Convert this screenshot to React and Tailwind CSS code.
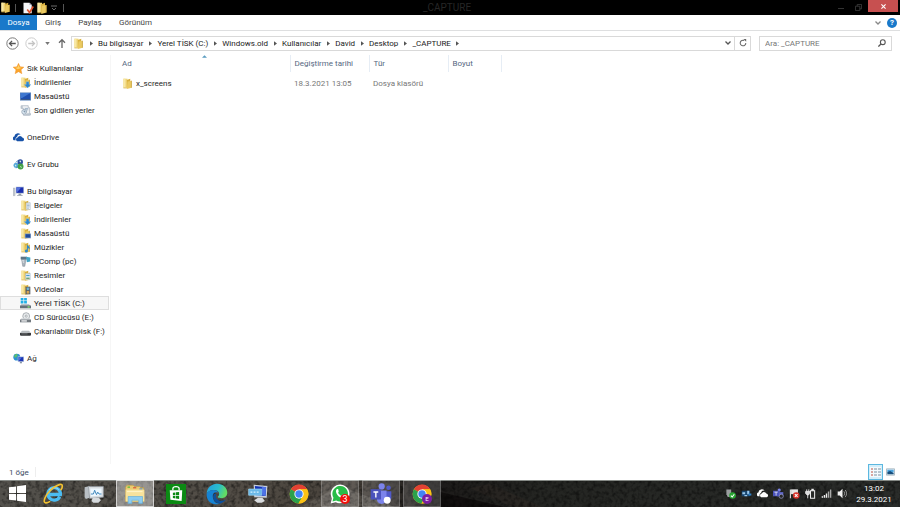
import React from "react";

function FolderShape() {
  return (
    <>
      <path d="M2 1h6v13H2z" fill="#efd67c" />
      <path d="M2 1h3v13H2z" fill="#f8e8a6" />
      <path d="M7 3l5-2v12l-5 2z" fill="#d9b03c" />
      <path d="M8 5l6-1v10l-7 2z" fill="#ebca62" />
      <path d="M13 4h1v10h-1z" fill="#c0982f" />
      <path d="M2 14h5v1H2z" fill="#d4ac3e" />
    </>
  );
}

function Folder({ className = "size-[11px]", children }) {
  return (
    <svg viewBox="0 0 16 16" className={className} aria-hidden="true">
      <FolderShape />
      {children}
    </svg>
  );
}

const downArrow = <path d="M9 7h4v4h3l-5 5-5-5h3z" fill="#2a86d1" stroke="#8cc5ee" strokeWidth=".5" />;

function Svg({ children, className = "size-[11px]", box = "0 0 16 16" }) {
  return (
    <svg viewBox={box} className={className} fill="none" aria-hidden="true">
      {children}
    </svg>
  );
}

const navIcons = {
  star: (
    <Svg>
      <path d="M8 .5l2.300 4.900 5.500.6-4.100 3.800 1.200 5.700L8 12.600l-4.900 2.900 1.200-5.700L.2 6l5.500-.6z" fill="#fba52c" stroke="#ee8a1d" strokeWidth=".6" />
      <path d="M8 3l1.500 3.500 3.500.5-6 2-4-2 3.500-.5z" fill="#ffd56b" />
    </Svg>
  ),
  downloads: <Folder>{downArrow}</Folder>,
  desktop: (
    <Svg>
      <path d="M0 2h16v12H0z" fill="#6f94c4" />
      <path d="M1 3h14v9H1z" fill="#1f4fae" />
      <path d="M1 3h14L3 10H1z" fill="#3f78d0" />
      <path d="M1 12h14v1H1z" fill="#2c456e" />
    </Svg>
  ),
  recent: (
    <Svg>
      <path d="M2 1h10v3h2v11H5V5H2z" fill="#eef1f4" stroke="#a5afba" />
      <path d="M1 1h3v4H1zM11 12h5v3H6z" fill="#b9c3cd" />
      <path d="M7 5h5M7 7h5M7 9h3" stroke="#7f9cb8" />
      <circle cx="6" cy="10" r="3.500" fill="#dce8f2" stroke="#8899aa" />
      <path d="M6 8v2h2" stroke="#49647f" />
    </Svg>
  ),
  onedrive: (
    <Svg>
      <path d="M1 12a3 3 0 0 1 1-5.500A5 5 0 0 1 11 4a4 4 0 0 0-5 3 4 4 0 0 0-2 5z" fill="#1752a8" />
      <path d="M6 13.500a3 3 0 0 1 .8-5.600A3.600 3.600 0 0 1 13.500 8a2.800 2.800 0 0 1 .5 5.500z" fill="#1752a8" />
    </Svg>
  ),
  homegroup: (
    <Svg>
      <circle cx="4.500" cy="9" r="3.700" fill="#57a8d8" />
      <circle cx="10.500" cy="4.500" r="4" fill="#2d4f9e" />
      <circle cx="11" cy="11" r="4.300" fill="#43a047" />
      <path d="M9 3l2-1 1 2-1 1zM3 8l2 1-1 2-1-1zM10 10l2 1 1 2-2-1z" fill="#d8f2e0" />
      <path d="M4 5l3-3M7 12l-3 1" stroke="#357fb5" />
    </Svg>
  ),
  computer: (
    <Svg>
      <path d="M0 3h3v11H0z" fill="#c7cdd4" stroke="#8d96a0" strokeWidth=".5" />
      <path d="M4 1h12v10H4z" fill="#b8c4d8" />
      <path d="M5 2h10v8H5z" fill="#1b2fb0" />
      <path d="M5 2h7L6 9H5z" fill="#5572dd" />
      <path d="M8 11h4v2h2v1H6v-1h2z" fill="#929da9" />
    </Svg>
  ),
  documents: (
    <Folder>
      <path d="M9 4h6v10H9z" fill="#f5f8fb" stroke="#92a4b5" strokeWidth=".6" />
      <path d="M10 6h4M10 8h4M10 10h4M10 12h3" stroke="#6b90b3" strokeWidth=".8" />
    </Folder>
  ),
  folderDesktop: (
    <Folder>
      <path d="M7 8h9v7H7z" fill="#87a3c8" />
      <path d="M8 9h7v5H8z" fill="#1f4a9a" />
    </Folder>
  ),
  music: (
    <Folder>
      <path d="M10 3c1 3 5 3 4 8-1-2-2-2-2.500-2v4a2.200 2.200 0 1 1-1.500-2z" fill="#2c88cc" />
    </Folder>
  ),
  pcomp: (
    <Svg>
      <path d="M2 3h7l-2 12H4z" fill="#aab4bd" stroke="#77828c" strokeWidth=".7" />
      <path d="M1 1h9v4H1z" fill="#5c7588" />
      <path d="M9 1l6 1v6l-5 1z" fill="#41a5c7" />
      <path d="M3 7h3M4 9h2" stroke="#fff" />
    </Svg>
  ),
  pictures: (
    <Folder>
      <path d="M8 5h7v9H8z" fill="#edf5fa" stroke="#8da5b7" strokeWidth=".6" />
      <path d="M9 7h5v2H9z" fill="#4b9dd1" />
      <path d="M9 11h5v2H9z" fill="#69a06a" />
    </Folder>
  ),
  videos: (
    <Folder>
      <path d="M8 4h7v11H8z" fill="#4d5358" />
      <path d="M10 5h3v4h-3z" fill="#69b4d7" />
      <path d="M10 10h3v4h-3z" fill="#d9a754" />
      <path d="M9 4v11M14 4v11" stroke="#ddd" strokeWidth=".7" strokeDasharray="1 1" />
    </Folder>
  ),
  localDisk: (
    <Svg>
      <path d="M1 0h4v3.500H1zM6 0h4v3.500H6zM1 4.500h4V8H1zM6 4.500h4V8H6z" fill="#1fb0e8" />
      <path d="M2 9h11l3 3H0z" fill="#aab3ba" />
      <path d="M0 11h16v4H0z" fill="#65717b" />
      <path d="M11 12h3v2h-3z" fill="#7fe36b" />
    </Svg>
  ),
  cd: (
    <Svg>
      <circle cx="9" cy="6" r="5" fill="#e8ebed" stroke="#8d949a" />
      <circle cx="9" cy="6" r="1.500" fill="#fff" stroke="#8d949a" />
      <path d="M2 9h12l2 3H0z" fill="#d5d9dc" />
      <path d="M0 11h16v4H0z" fill="#737a80" />
      <path d="M2 12h8v2H2z" fill="#eceeef" />
    </Svg>
  ),
  removable: (
    <Svg>
      <path d="M3 7h10l3 3H0z" fill="#b9bdc0" />
      <path d="M0 10h16v3l-1 1H1l-1-1z" fill="#37393b" />
      <path d="M2 11h9v1H2z" fill="#85898c" />
    </Svg>
  ),
  network: (
    <Svg>
      <circle cx="5.500" cy="6" r="5" fill="#2c8fd3" />
      <path d="M2 3l3-2 2 2-2 3-3 1zM6 8l3-1-1 3z" fill="#5cc06d" />
      <path d="M7 5h9v8H7z" fill="#bcc8dc" />
      <path d="M8 6h7v6H8z" fill="#1c36b4" />
      <path d="M8 6h5l-4 5H8z" fill="#4e70df" />
      <path d="M10 13h3v2h-3z" fill="#8996a4" />
    </Svg>
  ),
};

const groups = [
  {
    label: "Sık Kullanılanlar",
    icon: "star",
    items: [
      ["İndirilenler", "downloads"],
      ["Masaüstü", "desktop"],
      ["Son gidilen yerler", "recent"],
    ],
  },
  { label: "OneDrive", icon: "onedrive", items: [] },
  { label: "Ev Grubu", icon: "homegroup", items: [] },
  {
    label: "Bu bilgisayar",
    icon: "computer",
    items: [
      ["Belgeler", "documents"],
      ["İndirilenler", "downloads"],
      ["Masaüstü", "folderDesktop"],
      ["Müzikler", "music"],
      ["PComp (pc)", "pcomp"],
      ["Resimler", "pictures"],
      ["Videolar", "videos"],
      ["Yerel TİSK (C:)", "localDisk"],
      ["CD Sürücüsü (E:)", "cd"],
      ["Çıkarılabilir Disk (F:)", "removable"],
    ],
  },
  { label: "Ağ", icon: "network", items: [] },
];

const crumbs = ["Bu bilgisayar", "Yerel TİSK (C:)", "Windows.old", "Kullanıcılar", "David", "Desktop", "_CAPTURE"];

function CrumbArrow() {
  return (
    <span className="flex w-3.5 shrink-0 justify-center">
      <Svg box="0 0 4 6" className="h-[5px] w-[3px]">
        <path d="M0 0l4 3-4 3z" fill="#555" />
      </Svg>
    </span>
  );
}

function Chevron({ className = "h-1 w-1.5", color = "#555" }) {
  return (
    <Svg box="0 0 6 4" className={className}>
      <path d="M.5.500L3 3 5.500.5" stroke={color} strokeWidth="1.300" />
    </Svg>
  );
}

function TitleBar() {
  return (
    <header className="flex h-[15px] shrink-0 items-center bg-black">
      <Folder className="size-[11px] shrink-0" />
      <span className="ml-1 h-2 w-px bg-[#555]" />
      <button aria-label="Özellikler" className="ml-1.5">
        <Svg className="size-3">
          <path d="M2 1h8l3 3v11H2z" fill="#f4f5f7" />
          <path d="M10 1l3 3h-3z" fill="#aab" />
          <path d="M7 10l3 4 5-8" stroke="#e0532f" strokeWidth="2.200" />
        </Svg>
      </button>
      <button aria-label="Yeni klasör" className="ml-0.5">
        <Folder className="size-3" />
      </button>
      <button aria-label="Özelleştir" className="ml-[3px]">
        <Svg box="0 0 6 6" className="size-1.5">
          <path d="M0 1h6M1 3l2 2 2-2" stroke="#777" strokeWidth=".9" />
        </Svg>
      </button>
      <span className="ml-1.5 h-2 w-px bg-[#555]" />
      <h1 className="flex-1 pr-0.5 text-center text-[10px] leading-3 text-[#262626]">_CAPTURE</h1>
      <button aria-label="Simge durumuna küçült" className="flex h-full w-[18px] items-center justify-center">
        <span className="mt-0.5 h-px w-1.5 bg-[#333]" />
      </button>
      <button aria-label="Önceki boyut" className="flex h-full w-4 items-center justify-center">
        <Svg box="0 0 8 8" className="size-[7px]">
          <path d="M.5 2.500h5v5h-5zM2.500 2.500v-2h5v5h-2" stroke="#3a3a3a" />
        </Svg>
      </button>
      <button aria-label="Kapat" className="mr-0.5 ml-0.5 flex h-3 w-[30px] items-center justify-center self-start bg-[#c75050]">
        <Svg box="0 0 6 6" className="size-[5px]">
          <path d="M.5.500l5 5M5.500.500l-5 5" stroke="#fff" strokeWidth="1.300" />
        </Svg>
      </button>
    </header>
  );
}

function Ribbon() {
  return (
    <nav className="flex h-4 shrink-0 items-stretch border-b border-[#dedfe0] text-[#444]">
      <button className="w-[37px] bg-[#1979ca] text-white">Dosya</button>
      <button className="w-8">Giriş</button>
      <button className="w-[42px]">Paylaş</button>
      <button className="w-[49px]">Görünüm</button>
      <span className="flex-1" />
      <button aria-label="Şeridi genişlet" className="mr-1.5">
        <Chevron color="#888" />
      </button>
      <button aria-label="Yardım" className="mr-[3px] flex items-center">
        <span className="flex size-2.5 items-center justify-center rounded-full bg-[#1979ca] text-[8px] leading-[9px] font-bold text-white">?</span>
      </button>
    </nav>
  );
}

function AddressRow() {
  return (
    <div className="flex h-6 shrink-0 items-center">
      <button aria-label="Geri" className="ml-[6px]">
        <Svg className="size-[13px]">
          <circle cx="8" cy="8" r="7" stroke="#777" strokeWidth="1.200" />
          <path d="M12 8H4.500M7.500 4.800L4.300 8l3.200 3.200" stroke="#555" strokeWidth="1.600" />
        </Svg>
      </button>
      <button aria-label="İleri" className="ml-1.5">
        <Svg className="size-[13px]">
          <circle cx="8" cy="8" r="7" stroke="#ccc" strokeWidth="1.200" />
          <path d="M4 8h7.500M8.500 4.800L11.700 8l-3.200 3.200" stroke="#c4c4c4" strokeWidth="1.600" />
        </Svg>
      </button>
      <button aria-label="Son konumlar" className="ml-[7px]">
        <Svg box="0 0 6 4" className="h-[3px] w-[5px]">
          <path d="M0 0h6L3 4z" fill="#777" />
        </Svg>
      </button>
      <button aria-label="Yukarı" className="ml-2">
        <Svg box="0 0 8 10" className="h-2.5 w-2">
          <path d="M4 10V2M1 4.700L4 1.700l3 3" stroke="#666" strokeWidth="1.300" />
        </Svg>
      </button>
      <div className="ml-[5px] flex h-[15px] min-w-0 flex-1 items-center border border-[#d9d9d9] pl-px text-[#222]">
        <Folder className="size-[11px] shrink-0" />
        {crumbs.map((c) => (
          <React.Fragment key={c}>
            <CrumbArrow />
            <button className="whitespace-nowrap">{c}</button>
          </React.Fragment>
        ))}
        <CrumbArrow />
        <span className="flex-1" />
        <button aria-label="Önceki konumlar" className="mr-[3px]">
          <Chevron />
        </button>
        <button aria-label="Yenile" className="flex h-full w-4 items-center justify-center border-l border-[#d9d9d9]">
          <Svg box="0 0 10 10" className="size-2">
            <path d="M8.500 5A3.500 3.500 0 1 1 6.500 1.900" stroke="#666" strokeWidth="1.300" />
            <path d="M5.500 0h3.500v3.500z" fill="#666" />
          </Svg>
        </button>
      </div>
      <label className="mr-2 ml-2 flex h-[15px] w-[133px] shrink-0 items-center border border-[#d9d9d9] px-[5px]">
        <input aria-label="Ara" placeholder="Ara: _CAPTURE" className="min-w-0 flex-1 text-[8px] outline-none placeholder:text-[#777]" />
        <Svg box="0 0 10 10" className="size-2">
          <circle cx="6" cy="4" r="3" stroke="#555" strokeWidth="1.400" />
          <path d="M4 6L.5 9.500" stroke="#555" strokeWidth="1.600" />
        </Svg>
      </label>
    </div>
  );
}

function Sidebar() {
  return (
    <aside className="flex w-[111px] shrink-0 flex-col gap-[13px] border-r border-[#f6f6f6] pt-[6px] pr-px text-[#1e1e1e]">
      {groups.map((g) => (
        <div key={g.label}>
          <a href="#" className="flex h-3.5 items-center gap-[3px] pl-[13px]">
            {navIcons[g.icon]}
            {g.label}
          </a>
          {g.items.map(([label, icon]) => (
            <a
              key={label}
              href="#"
              className={
                icon === "localDisk"
                  ? "flex h-3.5 items-center gap-[3px] border border-[#dedede] bg-[#f7f7f7] pl-[19px] whitespace-nowrap"
                  : "flex h-3.5 items-center gap-[3px] border border-transparent pl-[19px] whitespace-nowrap"
              }
            >
              {navIcons[icon]}
              {label}
            </a>
          ))}
        </div>
      ))}
    </aside>
  );
}

function FileList() {
  return (
    <main className="min-w-0 flex-1">
      <table className="w-[390px] table-fixed border-collapse text-left">
        <colgroup>
          <col className="w-[179px]" />
          <col className="w-[79px]" />
          <col className="w-[79px]" />
          <col className="w-[53px]" />
        </colgroup>
        <thead>
          <tr className="h-[17px] text-[#56687f]">
            <th className="relative border-r border-[#e6edf5] pl-[11px] font-normal">
              Ad
              <Svg box="0 0 6 3" className="absolute top-0 right-[83px] h-[3px] w-[5px]">
                <path d="M0 3l3-3 3 3z" fill="#5a9cc0" />
              </Svg>
            </th>
            <th className="border-r border-[#e6edf5] pl-1 font-normal whitespace-nowrap">Değiştirme tarihi</th>
            <th className="border-r border-[#e6edf5] pl-1 font-normal">Tür</th>
            <th className="border-r border-[#e6edf5] pl-1 font-normal">Boyut</th>
          </tr>
        </thead>
        <tbody>
          <tr className="h-[22px] text-[#777]">
            <td className="pl-[11px] text-[#1e1e1e]">
              <span className="flex items-center gap-[3px]">
                <Folder />
                x_screens
              </span>
            </td>
            <td className="pl-1">18.3.2021 13:05</td>
            <td className="pl-1">Dosya klasörü</td>
            <td />
          </tr>
        </tbody>
      </table>
    </main>
  );
}

function StatusBar() {
  return (
    <footer className="flex h-4 shrink-0 items-center pr-0.5 pl-[9px] text-[#3c4c63]">
      <span>1 öğe</span>
      <span className="ml-1.5 h-2.5 w-px bg-[#eee]" />
      <span className="flex-1" />
      <button aria-label="Ayrıntılar" className="flex h-4 w-[15px] items-center justify-center border border-[#5cb8e0] bg-[#d3eefa]">
        <Svg box="0 0 11 10" className="h-2.5 w-[11px]">
          <path d="M0 0h11v10H0z" fill="#f4fafd" />
          <path d="M1 2h2M1 5h2M1 8h2" stroke="#d08a80" strokeWidth="1.500" />
          <path d="M4 2h3M8 2h3M4 5h3M8 5h3M4 8h3M8 8h3" stroke="#7890a0" />
        </Svg>
      </button>
      <button aria-label="Büyük simgeler" className="flex h-4 w-[15px] items-center justify-center">
        <Svg box="0 0 10 8" className="h-2 w-[9px]">
          <path d="M.5.500h9v7h-9z" fill="#e8f3fa" stroke="#a5b4be" />
          <path d="M1.500 1.500h7v3h-7z" fill="#4aa3dd" />
          <path d="M1.500 4l3-1 4 2v1.500h-7z" fill="#174e7c" />
        </Svg>
      </button>
    </footer>
  );
}

function ChromeShape() {
  return (
    <>
      <circle cx="16" cy="16" r="15" fill="#fbc116" />
      <path d="M16 16L3 8.500A15 15 0 0 1 29 8.500H16z" fill="#e34133" />
      <path d="M3 8.500A15 15 0 0 0 15 31l7-11.500L16 16z" fill="#2ca14c" />
      <path d="M16 8.500h13A15 15 0 0 1 15 31l7.500-11.500z" fill="#fbc116" />
      <circle cx="16" cy="16" r="7.400" fill="#fff" />
      <circle cx="16" cy="16" r="5.900" fill="#4285f4" />
    </>
  );
}

const big = "size-5";
const apps = [
  {
    name: "Internet Explorer",
    icon: (
      <Svg box="0 0 32 32" className="size-[21px]">
        <path d="M25.500 21A9.500 9.500 0 1 1 26.500 17.500H9" stroke="#4bbcf2" strokeWidth="5" />
        <path d="M9 11a10 10 0 0 1 15-1" stroke="#a4e2fb" strokeWidth="1.500" />
        <path d="M27 11c4-6 3-10-2-8.500C16 5 4 17 2 26c-1 6 4 5 9 2" stroke="#f3c231" strokeWidth="2.500" />
      </Svg>
    ),
  },
  {
    name: "Kaynak İzleyicisi",
    icon: (
      <Svg box="0 0 32 32" className={big}>
        <path d="M1 5l8-2v19l-6 2-2-3z" fill="#b9bfc4" />
        <path d="M7 4h24v17l-22 2z" fill="#d7dce0" stroke="#8b949b" />
        <path d="M10 7h18v11l-17 2z" fill="#eef8ff" />
        <path d="M11 16h4l2-6 3 7 2-4 2 3h4" stroke="#3982b9" strokeWidth="1.500" />
        <path d="M14 22h10l3 4-4 4h-8l-3-3z" fill="#d6dadd" />
      </Svg>
    ),
  },
  {
    name: "Dosya Gezgini",
    state: "active",
    icon: (
      <Svg box="0 0 32 32" className={big}>
        <path d="M1 5l2-3h10l2 2h8l2 2h5v22H1z" fill="#eacb70" stroke="#c29d43" />
        <path d="M4 4h4v2H4z" fill="#54b83d" />
        <path d="M13 5h5v2h-5z" fill="#d9583b" />
        <path d="M23 7h5v2h-5z" fill="#508fd0" />
        <path d="M1 9h30v19H1z" fill="#f8e29b" />
        <path d="M3 12h25" stroke="#fff3c5" strokeWidth="2" />
        <path d="M5 31V20h23v11h-6v-5H11v5z" fill="#8fcdf0" stroke="#5facd9" />
      </Svg>
    ),
  },
  {
    name: "Mağaza",
    icon: (
      <Svg box="0 0 32 32" className={big}>
        <path d="M0 0h32v32H0z" fill="#0b8a13" />
        <path d="M11 10V7c0-4 10-4 10 0v3" stroke="#fff" strokeWidth="2" />
        <path d="M6 10h20l-1 17-18-2z" fill="#fff" />
        <path d="M11 14l4-.5V18h-4zM16 13.300l5-.5V18h-5zM11 19h4v4l-4-.5zM16 19h5v5l-5-.8z" fill="#0b8a13" />
      </Svg>
    ),
  },
  {
    name: "Microsoft Edge",
    icon: (
      <Svg box="0 0 32 32" className="size-[22px]">
        <defs>
          <linearGradient id="edgeTop" x1="0" x2="1" y1="0" y2=".3">
            <stop offset="0" stopColor="#239de0" />
            <stop offset=".6" stopColor="#29bdcc" />
            <stop offset="1" stopColor="#62dc64" />
          </linearGradient>
        </defs>
        <path d="M1 16C1 7 8 1 16 1c9 0 15 6 15 13 0 5-4 8-9 8-4 0-6-1-4-3 3-4 0-9-6-9C6 10 2 13 1 16z" fill="url(#edgeTop)" />
        <path d="M1 16c1-4 5-6 10-6 4 0 6 2 7 4-6-2-9 2-8 7 1 6 5 9 10 9C8 34 0 25 1 16z" fill="#1683d3" />
        <path d="M11 17c-2 6 2 12 9 13 4-1 7-3 9-6-5 3-11 2-14-2-1-2-1-4 0-6-2-1-4 0-4 1z" fill="#0b4f9c" />
      </Svg>
    ),
  },
  {
    name: "Uzak Masaüstü",
    icon: (
      <Svg box="0 0 32 32" className={big}>
        <path d="M9 1l22 2-1 19-20-1z" fill="#c9d0da" />
        <path d="M11 3l18 2-1 14-16-1z" fill="#1233b5" />
        <path d="M22 4l7 1-1 14-5-1z" fill="#4d72e7" />
        <path d="M1 8h21v10H1z" fill="#6ab8e8" stroke="#a2dcf8" />
        <path d="M4 13h3M9 13h3M14 13h3" stroke="#d7f2ff" strokeWidth="2" />
        <path d="M16 22h7l4 5-5 3h-7l-5-4z" fill="#d9dcdf" />
      </Svg>
    ),
  },
  {
    name: "Google Chrome",
    icon: (
      <Svg box="0 0 32 32" className={big}>
        <ChromeShape />
      </Svg>
    ),
  },
  {
    name: "WhatsApp",
    state: "open",
    badge: "3",
    icon: (
      <Svg box="0 0 32 32" className={big}>
        <path d="M1 31l2-8A15 15 0 1 1 9 29z" fill="#fff" />
        <path d="M4 28l1.500-6A12.500 12.500 0 1 1 10 26.500z" fill="#29bd48" />
        <path d="M11 8c-5 5 4 16 11 15 3-1 3-3 2-4l-4-2-2 2c-2-1-4-3-5-5l1-2-1-4z" fill="#fff" />
      </Svg>
    ),
  },
  {
    name: "Microsoft Teams",
    state: "open",
    icon: (
      <Svg box="0 0 32 32" className="size-[22px]">
        <circle cx="17" cy="5" r="4.500" fill="#7b83eb" />
        <circle cx="27" cy="7" r="3.300" fill="#5059c9" />
        <path d="M22 12h9v9c0 4-3 6-7 5z" fill="#5059c9" />
        <path d="M10 11h14v12c0 10-14 10-14 0z" fill="#7b83eb" />
        <path d="M1 9h15v15H1z" fill="#4b53bc" />
        <path d="M5 13h7M8.500 13v8" stroke="#fff" strokeWidth="2" />
        <circle cx="25" cy="25" r="5" fill="#fff" />
      </Svg>
    ),
  },
  {
    name: "Google Chrome (E)",
    state: "open",
    badge: "E",
    icon: (
      <Svg box="0 0 32 32" className={big}>
        <ChromeShape />
      </Svg>
    ),
  },
];

const stateClass = {
  idle: "relative flex w-[38px] items-center justify-center",
  open: "relative flex w-[38px] items-center justify-center border border-white/20 bg-white/15",
  active: "relative flex w-[38px] items-center justify-center border border-white/60 bg-white/40",
};

const badgeClass = {
  3: "absolute right-[8px] bottom-[2px] flex size-2.5 items-center justify-center rounded-full bg-[#f4100c] text-[9px] leading-none text-white",
  E: "absolute right-[8px] bottom-[2px] flex size-2.5 items-center justify-center rounded-full bg-[#7b1fa2] text-[6px] leading-none text-white",
};

const trayIcons = [
  [
    "USB",
    <>
      <path d="M2 2h7v7l-2 4H4L2 9z" fill="#9a9d9f" />
      <circle cx="11" cy="11" r="4.800" fill="#28a532" />
      <path d="M8.500 11l2 2 3-4" stroke="#fff" strokeWidth="1.500" />
    </>,
  ],
  [
    "Ses denetimi",
    <>
      <path d="M1 4h12v8H1z" fill="#17456f" />
      <path d="M2 6h4v3H2zM9 4h3v5H9zM5 10h4v2H5z" fill="#9ac7ea" />
      <path d="M11 8h4v3h-4z" fill="#2f80c6" />
    </>,
  ],
  [
    "OneDrive",
    <>
      <path d="M1 12a3 3 0 0 1 1-5.500A5 5 0 0 1 11 4a4 4 0 0 0-5 3 4 4 0 0 0-2 5z" fill="#fff" />
      <path d="M6 13.500a3 3 0 0 1 .8-5.600A3.600 3.600 0 0 1 13.500 8a2.800 2.800 0 0 1 .5 5.500z" fill="#fff" />
    </>,
  ],
  [
    "Teams",
    <>
      <circle cx="9" cy="3" r="2.300" fill="#7b83eb" />
      <path d="M6 6h9v6H6z" fill="#6269cc" />
      <path d="M0 4h9v8H0z" fill="#4b53bc" />
      <path d="M2 6h5M4.500 6v5" stroke="#fff" />
      <circle cx="12" cy="12" r="3" fill="#262626" stroke="#9aa0d0" />
    </>,
  ],
  [
    "İşlem Merkezi",
    <>
      <path d="M2 2v13" stroke="#eee" strokeWidth="1.500" />
      <path d="M3 2h10v7H3z" fill="#e5e5e5" />
      <circle cx="10.500" cy="11" r="4.800" fill="#d8322a" />
      <path d="M8.500 9l4 4M12.500 9l-4 4" stroke="#fff" strokeWidth="1.500" />
    </>,
  ],
  [
    "Pil",
    <>
      <path d="M8 4h6v11H8zM10 2h2v2h-2z" stroke="#eee" strokeWidth="1.500" />
      <path d="M1 5h6v3l-2 2H3L1 8zM4 9v6M2.500 2v3M5.500 2v3" stroke="#eee" strokeWidth="1.300" fill="#ddd" />
    </>,
  ],
  [
    "Ağ",
    <>
      <path d="M1 12h2v2H1zM4 10h2v4H4zM7 8h2v6H7z" fill="#eee" />
      <path d="M10 5h2v9h-2zM13 2h2v12h-2z" fill="#aaa" />
    </>,
  ],
  [
    "Ses",
    <>
      <path d="M1 5h3l4-4v14l-4-4H1z" fill="#eee" />
      <path d="M10 5c1.500 2 1.500 4 0 6M12 3c2.500 3 2.500 7 0 10" stroke="#ccc" />
    </>,
  ],
];

function TaskbarTexture() {
  return (
    <svg className="absolute inset-0 size-full" preserveAspectRatio="none" viewBox="0 0 900 27" aria-hidden="true">
      <defs>
        <linearGradient id="stone">
          <stop offset="0" stopColor="#53514c" />
          <stop offset=".25" stopColor="#524d46" />
          <stop offset=".38" stopColor="#48423b" />
          <stop offset=".48" stopColor="#1c1a19" />
          <stop offset=".6" stopColor="#242522" />
          <stop offset="1" stopColor="#2a2c2a" />
        </linearGradient>
        <filter id="grain" x="0" y="0" width="100%" height="100%">
          <feTurbulence type="fractalNoise" baseFrequency=".25" numOctaves="3" seed="4" />
          <feColorMatrix values="0 0 0 0 0  0 0 0 0 0  0 0 0 0 0  2.400 0 0 0 -1" />
        </filter>
      </defs>
      <path d="M0 0h900v27H0z" fill="url(#stone)" />
      <path d="M300 27L340 6l55 21z" fill="#68635b" opacity=".6" />
      <path d="M440 12l65 15h-65z" fill="#0c0909" opacity=".7" />
      <path d="M470 8l42 19h30L490 4z" fill="#332a25" opacity=".4" />
      <rect width="900" height="27" filter="url(#grain)" opacity=".5" />
      <path d="M0 0h900v1H0z" fill="#858985" />
    </svg>
  );
}

function Taskbar() {
  return (
    <div className="relative flex h-[27px] shrink-0 overflow-hidden bg-[#242422]">
      <TaskbarTexture />
      <button aria-label="Başlat" className="relative flex w-[34px] items-center justify-center">
        <Svg box="0 0 18 18" className="size-[17px]">
          <path d="M0 2.500L7.500 1.500v7H0zM8.500 1.300L18 0v8.500H8.500zM0 9.500h7.500v7L0 15.500zM8.500 9.500H18V18L8.500 16.700z" fill="#fff" />
        </Svg>
      </button>
      <div className="flex gap-[3px]">
        {apps.map((a) => (
          <button key={a.name} aria-label={a.name} className={stateClass[a.state || "idle"]}>
            {a.icon}
            {a.badge && <span className={badgeClass[a.badge]}>{a.badge}</span>}
          </button>
        ))}
      </div>
      <span className="flex-1" />
      <div className="relative flex items-center gap-[5px]">
        {trayIcons.map(([name, shape]) => (
          <button key={name} aria-label={name}>
            <Svg>{shape}</Svg>
          </button>
        ))}
      </div>
      <button className="relative ml-2 flex w-11 flex-col items-center justify-center pr-2 leading-[11px] text-white">
        <span>13:02</span>
        <span>29.3.2021</span>
      </button>
    </div>
  );
}

export default function App() {
  return (
    <div className="flex h-screen flex-col bg-white font-[Roboto,'Noto_Sans',sans-serif] text-[8px] leading-[11px]">
      <TitleBar />
      <Ribbon />
      <AddressRow />
      <div className="flex min-h-0 flex-1">
        <Sidebar />
        <FileList />
      </div>
      <StatusBar />
      <Taskbar />
    </div>
  );
}
